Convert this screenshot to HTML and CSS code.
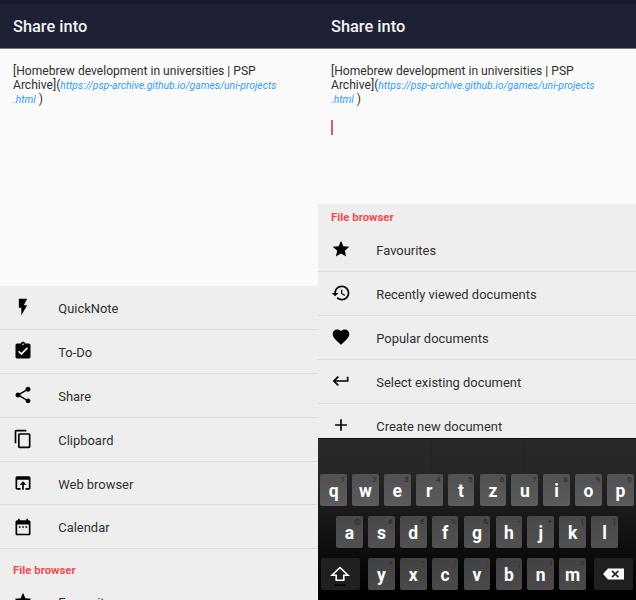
FILE: index.html
```html
<!DOCTYPE html>
<html lang="en">
<head>
<meta charset="utf-8">
<title>Share into</title>
<link rel="stylesheet" href="styles.css">
</head>
<body>
<main class="screens">
  <section class="screen">
    <div class="status"></div>
    <header class="bar">Share into</header>
    <div class="editor">[Homebrew development in universities | PSP<br>Archive](<a class="url">https://psp-archive.github.io/games/uni-projects<br>.html</a> )</div>
    <div class="list">
      <div class="row"><svg class="icon" viewBox="0 0 24 24"><path d="M7 2v11h3v9l7-12h-4l4-8z"/></svg><span>QuickNote</span></div>
      <div class="row"><svg class="icon" viewBox="0 0 24 24"><path d="M19 3h-4.18C14.4 1.84 13.3 1 12 1s-2.400.84-2.820 2H5c-1.100 0-2 .9-2 2v14c0 1.100.9 2 2 2h14c1.100 0 2-.9 2-2V5c0-1.100-.9-2-2-2zm-7 0c.55 0 1 .45 1 1s-.45 1-1 1-1-.45-1-1 .45-1 1-1zm-2 14l-4-4 1.410-1.410L10 14.170l6.590-6.590L18 9l-8 8z"/></svg><span>To-Do</span></div>
      <div class="row"><svg class="icon" viewBox="0 0 24 24"><path d="M18 16.080c-.76 0-1.440.3-1.960.77L8.910 12.700c.05-.23.09-.46.09-.7s-.04-.47-.09-.7l7.050-4.110c.54.5 1.250.81 2.040.81 1.660 0 3-1.340 3-3s-1.340-3-3-3-3 1.340-3 3c0 .24.04.47.09.7L8.040 9.810C7.500 9.310 6.790 9 6 9c-1.660 0-3 1.340-3 3s1.340 3 3 3c.79 0 1.500-.31 2.040-.81l7.120 4.160c-.05.21-.08.43-.08.65 0 1.610 1.310 2.920 2.920 2.920s2.920-1.310 2.920-2.920-1.310-2.920-2.920-2.920z"/></svg><span>Share</span></div>
      <div class="row"><svg class="icon" viewBox="0 0 24 24"><path d="M16 1H4c-1.100 0-2 .9-2 2v14h2V3h12V1zm3 4H8c-1.100 0-2 .9-2 2v14c0 1.100.9 2 2 2h11c1.100 0 2-.9 2-2V7c0-1.100-.9-2-2-2zm0 16H8V7h11v14z"/></svg><span>Clipboard</span></div>
      <div class="row"><svg class="icon" viewBox="0 0 24 24"><path d="M19 4H5c-1.110 0-2 .9-2 2v12c0 1.100.89 2 2 2h4v-2H5V8h14v10h-4v2h4c1.100 0 2-.9 2-2V6c0-1.100-.89-2-2-2zm-7 6l-4 4h3v6h2v-6h3l-4-4z"/></svg><span>Web browser</span></div>
      <div class="row"><svg class="icon" viewBox="0 0 24 24"><path d="M9 11H7v2h2v-2zm4 0h-2v2h2v-2zm4 0h-2v2h2v-2zm2-7h-1V2h-2v2H8V2H6v2H5c-1.110 0-2 .9-2 2v14c0 1.100.89 2 2 2h14c1.100 0 2-.9 2-2V6c0-1.100-.9-2-2-2zm0 16H5V9h14v11z"/></svg><span>Calendar</span></div>
      <h2 class="group">File browser</h2>
      <div class="row"><svg class="icon" viewBox="0 0 24 24"><path d="M12 17.270L18.180 21l-1.640-7.030L22 9.240l-7.190-.61L12 2 9.190 8.630 2 9.240l5.460 4.730L5.820 21z"/></svg><span>Favourites</span></div>
    </div>
  </section>

  <section class="screen">
    <div class="status"></div>
    <header class="bar">Share into</header>
    <div class="editor short">[Homebrew development in universities | PSP<br>Archive](<a class="url">https://psp-archive.github.io/games/uni-projects<br>.html</a> )<div class="caret"></div></div>
    <div class="list scrolled">
      <h2 class="group tight">File browser</h2>
      <div class="row"><svg class="icon" viewBox="0 0 24 24"><path d="M12 17.270L18.180 21l-1.640-7.030L22 9.240l-7.190-.61L12 2 9.190 8.630 2 9.240l5.460 4.730L5.820 21z"/></svg><span>Favourites</span></div>
      <div class="row"><svg class="icon" viewBox="0 0 24 24"><path d="M13 3c-4.970 0-9 4.030-9 9H1l3.890 3.890.07.14L9 12H6c0-3.870 3.130-7 7-7s7 3.130 7 7-3.130 7-7 7c-1.930 0-3.680-.79-4.940-2.060l-1.420 1.420C8.270 19.990 10.510 21 13 21c4.970 0 9-4.030 9-9s-4.030-9-9-9zm-1 5v5l4.280 2.540.72-1.210-3.500-2.080V8H12z"/></svg><span>Recently viewed documents</span></div>
      <div class="row"><svg class="icon" viewBox="0 0 24 24"><path d="M12 21.350l-1.450-1.320C5.400 15.360 2 12.280 2 8.500 2 5.420 4.420 3 7.500 3c1.740 0 3.410.81 4.500 2.090C13.090 3.810 14.760 3 16.500 3 19.580 3 22 5.420 22 8.500c0 3.780-3.400 6.860-8.550 11.540L12 21.350z"/></svg><span>Popular documents</span></div>
      <div class="row"><svg class="icon" viewBox="0 0 24 24"><path d="M19 7v4H5.830l3.580-3.590L8 6l-6 6 6 6 1.410-1.410L5.830 13H21V7z"/></svg><span>Select existing document</span></div>
      <div class="row"><svg class="icon" viewBox="0 0 24 24"><path d="M19 13h-6v6h-2v-6H5v-2h6V5h2v6h6v2z"/></svg><span>Create new document</span></div>
    </div>
    <div class="keyboard">
      <div class="suggest"><i></i><i></i><i></i></div>
      <div class="keys">
        <div class="key">q<sup>1</sup></div><div class="key">w<sup>2</sup></div><div class="key">e<sup>3</sup></div><div class="key">r<sup>4</sup></div><div class="key">t<sup>5</sup></div><div class="key">z<sup>6</sup></div><div class="key">u<sup>7</sup></div><div class="key">i<sup>8</sup></div><div class="key">o<sup>9</sup></div><div class="key">p<sup>0</sup></div>
      </div>
      <div class="keys">
        <div class="key">a<sup>@</sup></div><div class="key">s<sup>#</sup></div><div class="key">d<sup>€</sup></div><div class="key">f<sup>%</sup></div><div class="key">g<sup>&amp;</sup></div><div class="key">h<sup>-</sup></div><div class="key">j<sup>+</sup></div><div class="key">k<sup>(</sup></div><div class="key">l<sup>)</sup></div>
      </div>
      <div class="keys">
        <div class="key wide shift"><svg width="20" height="24" viewBox="0 0 20 24"><path d="M10 5.500L2 13.300h4.200v5h7.600v-5H18z" fill="none" stroke="#fff" stroke-width="1.600"/><path d="M4 23.200h12" stroke="#050505" stroke-width="1.500"/></svg></div>
        <div class="key">y<sup>*</sup></div><div class="key">x<sup>"</sup></div><div class="key">c<sup>'</sup></div><div class="key">v<sup>:</sup></div><div class="key">b<sup>;</sup></div><div class="key">n<sup>!</sup></div><div class="key">m<sup>?</sup></div>
        <div class="key wide del"><svg width="21" height="12" viewBox="0 0 21 12"><path d="M0 6L5 .5h16v11H5z" fill="#fff"/><path d="M9 2.800l6.400 6.400M15.400 2.800L9 9.200" stroke="#292929" stroke-width="1.700"/></svg></div>
      </div>
    </div>
  </section>
</main>
</body>
</html>
```
FILE: styles.css
```css
* { box-sizing: border-box; }
body { margin: 0; width: 636px; height: 600px; overflow: hidden; font-family: Roboto, "Liberation Sans", sans-serif; color: #303030; }
.screens { display: flex; height: 600px; }
.screen { width: 318px; height: 600px; display: flex; flex-direction: column; overflow: hidden; background: #fafafa; }
.status { flex: none; height: 4px; background: #171a2b; }
.bar { flex: none; height: 45px; padding-left: 13px; line-height: 46px; font-size: 16.4px; font-weight: 500; color: #f4f4f7; background: #1e2135; border-bottom: 1px solid #777582; }
.editor { flex: none; height: 237px; padding: 15px 0 0 13px; font-size: 12.080px; line-height: 14px; white-space: nowrap; }
.editor.short { height: 155px; }
.url { font-size: 10.330px; line-height: 10px; font-style: italic; color: #31a0f0; }
.caret { width: 2px; height: 15px; margin-top: 14px; background: #df5d68; }
.list { flex: 1; min-height: 0; overflow: hidden; background: #eee; }
.row { display: flex; align-items: center; height: 43.9px; padding: 2px 0 0 12.6px; border-bottom: 1px solid #dcdcdc; font-size: 12.930px; }
.icon { width: 20px; height: 20px; margin-right: 25.7px; fill: #000; position: relative; top: -1.3px; }
.group { margin: 0; height: 31px; padding: 12px 0 0 13px; font-size: 11.400px; line-height: 18px; font-weight: 700; color: #f24c4c; }
.group.tight { height: 24px; padding-top: 4px; }
.keyboard { flex: none; height: 162px; background: linear-gradient(#292929 0, #262626 33px, #000 155px); border-top: 1px solid #111; }
.suggest { display: flex; height: 35px; }
.suggest i { flex: 1; border-right: 1px solid #242424; }
.suggest i:nth-child(2) { flex: 0 0 92px; }
.suggest i:last-child { border: 0; }
.keys { display: flex; justify-content: center; gap: 5.200px; height: 32.300px; margin-bottom: 9.800px; }
.key { position: relative; width: 26.700px; height: 32.300px; border-radius: 2px; background: linear-gradient(#515151, #5b5b5b); color: #fff; text-align: center; font-size: 17.500px; font-weight: 700; line-height: 35px; }
.keys:nth-child(3) .key { background: linear-gradient(#494949, #515151); }
.keys:nth-child(4) .key { background: linear-gradient(#424242, #4a4a4a); }
.key sup { position: absolute; right: 2px; top: 1px; font-size: 8px; line-height: 9px; font-weight: 400; color: #262626; }
.keys:nth-child(4) .wide { display: flex; align-items: center; justify-content: center; width: 39.300px; background: #202020; }
.shift { margin-right: 3px; }
.del { margin-left: 3px; }
```
